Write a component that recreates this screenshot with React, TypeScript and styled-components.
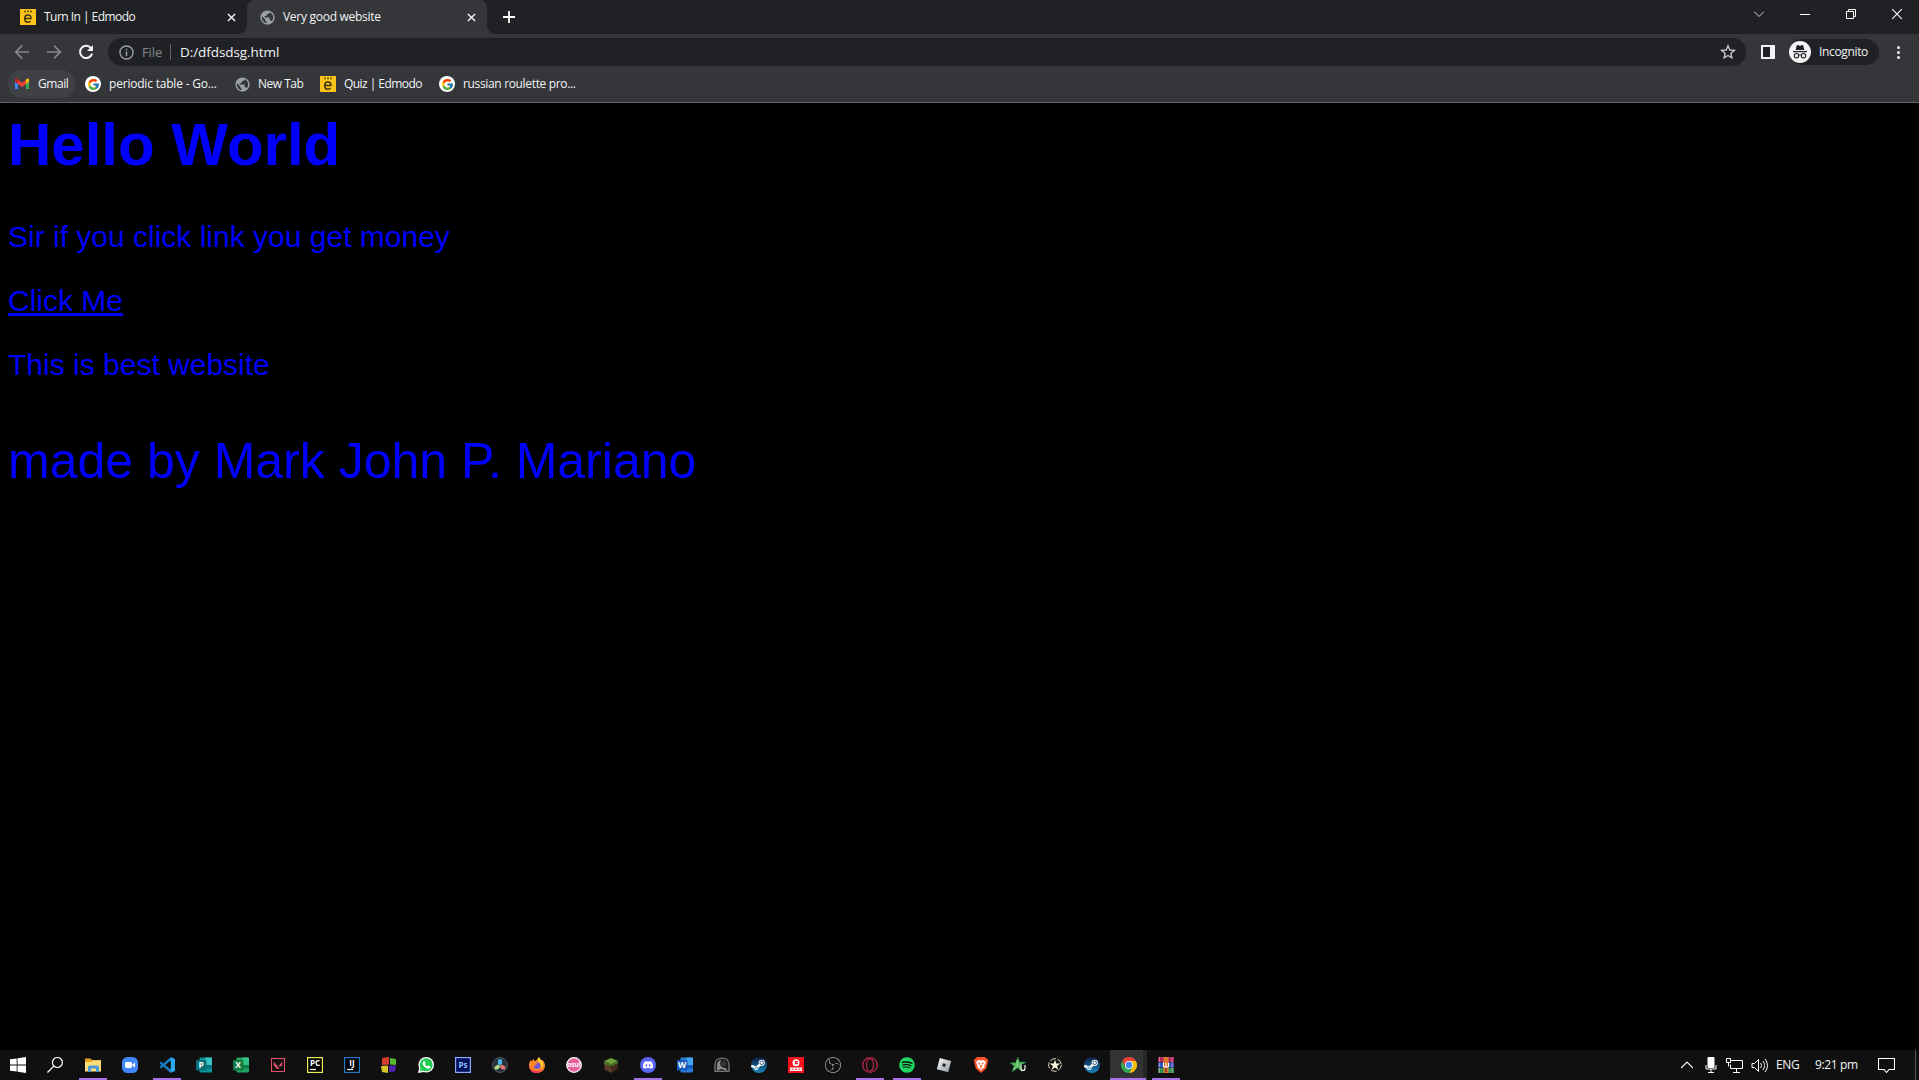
import React from "react";
import styled, { createGlobalStyle } from "styled-components";
import { FcGoogle } from "react-icons/fc";
import { FaSpotify, FaDiscord } from "react-icons/fa";
import { MdPublic } from "react-icons/md";
import { SiObsstudio, SiValorant } from "react-icons/si";

const Global = createGlobalStyle`
  * { box-sizing: border-box; }
  html, body { margin: 0; background: #000; overflow: hidden; }
  svg { display: block; flex: none; }
`;
const Screen = styled.div`
  width: 1919px; height: 1080px; display: flex; flex-direction: column;
  background: #000; font-family: "Open Sans", "Noto Sans", sans-serif; color: #e8eaed;
`;
const Label = styled.span<{ $w?: number; $size?: number; $ls?: number; $color?: string }>`
  flex: none; white-space: nowrap; line-height: 16px;
  width: ${p => (p.$w ? p.$w + "px" : "auto")};
  font-size: ${p => p.$size ?? 12}px;
  letter-spacing: ${p => p.$ls ?? -0.35}px;
  color: ${p => p.$color ?? "#f1f3f4"};
`;
const TabStrip = styled.div`
  height: 34px; flex: none; background: #202124; display: flex; align-items: stretch;
`;
const Tab = styled.div<{ $active?: boolean }>`
  position: relative; flex: none; display: flex; align-items: center;
  width: ${p => (p.$active ? 240 : 247)}px;
  padding: 0 11px 0 ${p => (p.$active ? 12 : 20)}px;
  background: ${p => (p.$active ? "#35363a" : "transparent")};
  border-radius: 8px 8px 0 0; gap: 8px;
  ${p => p.$active && `
    &::before, &::after { content: ""; position: absolute; bottom: 0; width: 8px; height: 8px; }
    &::before { left: -8px; background: radial-gradient(circle at 0 0, transparent 7.5px, #35363a 8px); }
    &::after { right: -8px; background: radial-gradient(circle at 100% 0, transparent 7.5px, #35363a 8px); }
  `}
`;
const Spacer = styled.div`flex: 1;`;
const NewTab = styled.div`width: 44px; display: flex; align-items: center; justify-content: center;`;
const WindowControls = styled.div`display: flex; margin-right: -1px;`;
const WindowButton = styled.div`
  width: 46px; height: 28px; display: flex; align-items: center; justify-content: center;
`;
const Toolbar = styled.div`
  height: 36px; flex: none; background: #35363a; display: flex; align-items: center; padding: 0 12px 0 6px;
`;
const NavButton = styled.div`width: 32px; display: flex; justify-content: center;`;
const AddressBar = styled.div`
  width: 1638px; height: 28px; margin-left: 6px; border-radius: 14px; background: #202124;
  display: flex; align-items: center; padding: 0 10px 0 11px;
`;
const Scheme = styled.div`margin-left: 8px; display: flex;`;
const AddressDivider = styled.div`width: 1px; height: 16px; margin: 0 9px 0 7px; background: #5f6368;`;
const SidePanel = styled.div`
  width: 14px; height: 14px; margin: 0 14px 0 15px; background: #202124;
  border: 2px solid #f1f3f4; border-right-width: 5px;
`;
const Profile = styled.div`
  width: 90px; height: 26px; border-radius: 13px; background: #202124; display: flex; align-items: center; gap: 8px;
`;
const Dots = styled.div`
  display: flex; flex-direction: column; gap: 2px; margin-left: 18px;
  i { width: 3px; height: 3px; border-radius: 50%; background: #f1f3f4; }
`;
const Bookmarks = styled.div`
  height: 33px; flex: none; background: #35363a; border-bottom: 1px solid #626366;
  display: flex; align-items: flex-start; padding-left: 8px;
`;
const Bookmark = styled.div<{ $hover?: boolean }>`
  height: 28px; display: flex; align-items: center; gap: 8px; flex: none;
  padding: 0 6px; margin-right: 4px; border-radius: 14px;
  background: ${p => (p.$hover ? "#404145" : "transparent")};
`;
const Disc = styled.span`
  width: 16px; height: 16px; border-radius: 50%; background: #fff;
  display: flex; align-items: center; justify-content: center;
`;
const Page = styled.main`
  flex: 1; padding: 8px; background: #000; color: #0000ff; overflow: hidden;
  font-family: "Liberation Sans", Arial, sans-serif; font-size: 30px;
`;
const Title = styled.h1`font-size: 60px; line-height: 68px; margin: 0 0 41px; font-weight: bold;`;
const Paragraph = styled.p`margin: 0 0 30px; line-height: 34px;`;
const Link = styled.a`color: #0000ff; text-decoration: underline; text-decoration-thickness: 3px; text-underline-offset: 2px;`;
const Credit = styled.p`font-size: 50px; line-height: 57px; margin: 51px 0 0;`;
const Taskbar = styled.footer`
  height: 30px; flex: none; background: #101010; display: flex; align-items: stretch;
`;
const Slot = styled.div<{ $open?: boolean; $current?: boolean; $system?: boolean }>`
  width: 37px; flex: none; display: flex; align-items: center; justify-content: center;
  padding-right: ${p => (p.$system ? 2 : 0)}px;
  background: ${p => (p.$current ? "linear-gradient(90deg, #333 33px, #262626 33px)" : "transparent")};
  position: relative;
  &::after {
    content: ""; position: absolute; bottom: 0; height: 2px; background: #a873e8;
    left: ${p => (p.$current ? 0 : 5)}px; right: ${p => (p.$current ? 1 : 4)}px;
    display: ${p => (p.$open || p.$current ? "block" : "none")};
  }
`;
const Tray = styled.div`display: flex; align-items: center; width: 240px; flex: none;`;
const TrayItem = styled.div<{ $w: number }>`width: ${p => p.$w}px; flex: none; display: flex; justify-content: center;`;
const DesktopEdge = styled.div`width: 1px; height: 30px; background: #555; margin-left: auto; margin-right: 3px;`;

const Svg = ({ children, s = 16, box = 16 }: { children: React.ReactNode; s?: number; box?: number }) => (
  <svg width={s} height={s} viewBox={`0 0 ${box} ${box}`} fill="none">{children}</svg>
);
const Letter = ({ x, y, size, fill = "#fff", children }: { x: number; y: number; size: number; fill?: string; children: string }) => (
  <text x={x} y={y} fontSize={size} fill={fill} fontWeight="700" textAnchor="middle" fontFamily="Open Sans, sans-serif">{children}</text>
);
const Edmodo = () => (
  <Svg>
    <path fill="#fcc419" d="M0 0h16v16H0z" />
    <path d="M4.900 9.600h6.100C11 7.300 9.900 6 8 6S4.700 7.600 4.700 9.700 5.900 13.200 8 13.200c1.100 0 2-.3 2.700-.9" stroke="#3b3213" strokeWidth="1.500" />
    <path d="M4.600 1.600l.9 1.700M8 1.200v2M11.400 1.600l-.9 1.700" stroke="#3b3213" strokeWidth="1.300" />
  </Svg>
);
const Globe = () => <MdPublic size={17} color="#9aa0a6" style={{ margin: -0.5 }} />;
const Close = ({ s = 9, w = 1.6 }: { s?: number; w?: number }) => (
  <Svg s={s} box={10}><path d="M1 1l8 8M9 1L1 9" stroke="#f1f3f4" strokeWidth={w} /></Svg>
);
const Arrow = ({ flip }: { flip?: boolean }) => (
  <Svg>
    <path transform={flip ? "matrix(-1 0 0 1 16 0)" : undefined} d="M15 8H2M8 1.700L1.700 8 8 14.300" stroke="#85878b" strokeWidth="1.700" />
  </Svg>
);
const Gmail = () => (
  <Svg>
    <path fill="#4285f4" d="M1 4v9h3V6z" /><path fill="#34a853" d="M12 6v7h3V4z" />
    <path fill="#ea4335" d="M4 3.800l4 3 4-3V8l-4 3-4-3z" />
    <path fill="#c5221f" d="M1 4c0-1.500 1.600-1.900 3-.6V8L1 5.800z" />
    <path fill="#fbbc04" d="M15 4c0-1.500-1.600-1.900-3-.6V8l3-2.200z" />
  </Svg>
);
const Incognito = () => (
  <Svg s={22} box={22}>
    <circle cx="11" cy="11" r="11" fill="#f1f3f4" />
    <path fill="#202124" d="M7.600 4.800c.3-.9.900-.9 1.500-.5 1.200.5 2.500.5 3.700 0 .7-.4 1.300-.3 1.500.5l1 4.200H6.600zM4 10h14v1.200H4z" />
    <path d="M9.700 14.300c.8-.6 1.800-.6 2.600 0" stroke="#202124" />
    <circle cx="7.500" cy="14.700" r="2.200" stroke="#202124" strokeWidth="1.100" /><circle cx="14.500" cy="14.700" r="2.200" stroke="#202124" strokeWidth="1.100" />
  </Svg>
);
const Windows = () => (
  <Svg><path fill="#fff" d="M0 2.300l6.700-.9v6.200H0zM7.500 1.300L16 0v7.600H7.500zM0 8.400h6.700v6.200L0 13.700zM7.500 8.400H16V16l-8.500-1.200z" /></Svg>
);
const Search = () => <Svg><circle cx="10.400" cy="5.500" r="5" stroke="#fff" strokeWidth="1.200" /><path d="M6.800 9.100L.5 15.500" stroke="#fff" strokeWidth="1.300" /></Svg>;
const Folder = () => (
  <Svg>
    <path fill="#e9a21b" d="M0 1.500h5.500L7 3h9v4H0z" /><path fill="#ffdc7a" d="M0 5h6l1.500-1.500H16v11H0z" />
    <path fill="#4a9bd8" d="M3 15V10.500C3 9 4 8.500 5 8.500h7c1 0 2 .5 2 2V15h-3v-3.500H6V15z" />
  </Svg>
);
const Zoom = () => (
  <Svg><rect width="16" height="16" rx="5.500" fill="#4087fc" /><rect x="3" y="5" width="7" height="6" rx="1.400" fill="#fff" /><path fill="#fff" d="M10.500 7.500L13 5.600v5l-2.500-1.800z" /></Svg>
);
const Code = () => (
  <Svg>
    <path d="M1.200 5.300L12 14.500M1.200 10.700L12 1.500" stroke="#1381c9" strokeWidth="2.300" />
    <path fill="#2aa7ef" d="M11.500 0L16 2v12l-4.500 2z" /><path fill="#101010" d="M11.600 4.900v6.200L7.800 8z" />
  </Svg>
);
const Office = ({ ch, dark, mid, light }: { ch: string; dark: string; mid: string; light: string }) => (
  <Svg>
    <rect x="3.500" y=".5" width="12.500" height="15" rx="1" fill={mid} />
    <path fill={light} d="M9.500.5H15a1 1 0 011 1V8H9.500z" /><path fill={dark} d="M9.500 8H16v3.500H9.500z" />
    <rect y="3" width="10.500" height="10.500" rx="1" fill={dark} />
    <Letter x={5.2} y={11.200} size={8.5}>{ch}</Letter>
  </Svg>
);
const Framed = ({ ch, border, fill = "#000", fg = "#fff", bar }: { ch: string; border: string; fill?: string; fg?: string; bar?: boolean }) => (
  <Svg>
    <rect x=".6" y=".6" width="14.800" height="14.800" fill={fill} stroke={border} strokeWidth="1.200" />
    <Letter x={8} y={bar ? 9 : 11} size={8} fill={fg}>{ch}</Letter>
    {bar && <path d="M3 12.500h6" stroke="#fff" strokeWidth="1.200" />}
  </Svg>
);
const Valorant = () => (
  <Svg><rect x="1.500" y="1.500" width="13" height="13" stroke="#e0526b" strokeWidth="1.100" /><g transform="translate(3.500 3.500)"><SiValorant size={9} color="#e0526b" /></g></Svg>
);
const Blocks = () => (
  <Svg><path fill="#d93a2e" d="M1 1l7-1v7.500L1 8z" /><path fill="#58b82e" d="M9 1l6 1v6l-6-.5z" /><path fill="#d6c42d" d="M0 9l7-.5V16l-6-1z" /><path fill="#5222ad" d="M8 8.500h7l-1 6-6 .5z" /></Svg>
);
const WhatsApp = () => (
  <Svg>
    <circle cx="8.200" cy="7.800" r="7.800" fill="#fff" /><path fill="#fff" d="M0 16l1.500-6L6 15z" />
    <circle cx="8.200" cy="7.800" r="6.500" fill="#24c950" /><path fill="#24c950" d="M1.800 14.200l1-4 3 3z" />
    <path fill="#fff" d="M5.500 4.200c.6-.5 1.200-.3 1.400.2l.6 1.400c.1.400-.5.900-.7 1.200.6 1.200 1.500 2 2.700 2.600.4-.4.800-1.100 1.200-1l1.500.8c.5.300.3 1-.1 1.500-1.400 1.400-3.600.5-5.100-.7C5.300 8.900 3.600 6 5.500 4.200z" />
  </Svg>
);
const Resolve = () => (
  <Svg><circle cx="8" cy="8" r="7.500" fill="#28323c" stroke="#59636d" strokeWidth=".8" /><ellipse cx="8" cy="4.900" rx="2.200" ry="3" fill="#4bb5e9" /><ellipse cx="5.200" cy="10.200" rx="2.900" ry="2" transform="rotate(-30 5.200 10.200)" fill="#b9dc83" /><ellipse cx="10.800" cy="10.200" rx="2.900" ry="2" transform="rotate(30 10.800 10.200)" fill="#ee746e" /></Svg>
);
const Firefox = () => (
  <Svg>
    <path fill="#ff8a25" d="M2 3l1 1.300L4.500 2l1.300 2C8 4 8.500 1.500 10 0c.4 2 2 2.600 3 3.800l.8-.6C15.300 5 16 6.800 16 8.600 16 13 12.500 16 8 16S0 12.800 0 8.500C0 6 .8 4.500 2 3z" />
    <path fill="#ffd33a" d="M10 0c.4 2 2 2.600 3 3.800 1.800 2.400 1.500 6-.5 8C13 8 11 5 8.400 4 9 2.300 9 1.300 10 0z" />
    <path fill="#fc375d" d="M0 8c.7 3 2 5 5 5.600 3 .8 6 0 8-1.600-1 2.600-3 4-6 4-4 0-7-3.500-7-8z" /><circle cx="8" cy="8.700" r="3.300" fill="#7556d8" />
    <path fill="#ff8a25" d="M3 6.400l4-.6c1 .1 1.500 1 .5 1.500L5.800 8.500 5 10z" />
  </Svg>
);
const Osu = () => (
  <Svg><circle cx="8" cy="8" r="7.300" fill="#e8629e" stroke="#fff" strokeWidth="1.200" /><Letter x={8} y={10.300} size={6.500}>osu!</Letter></Svg>
);
const Grass = () => (
  <Svg><path fill="#6ca13a" d="M1 4l7-3 7 3-7 3.500z" /><path fill="#5a3c26" d="M1 4l7 3.500V16l-6.500-3.500z" /><path fill="#432c1d" d="M15 4L8 7.500V16l6.500-3.500z" /><path fill="#47762a" d="M1 4l7 3.500L15 4v2l-2 1.500-1-.5-2 2-2-.6L6 9 5 7.500 3 8 1 6z" /></Svg>
);
const Discord = () => <Svg><circle cx="8" cy="8" r="8" fill="#5865f2" /><g transform="translate(2.500 2.500)"><FaDiscord size={11} color="#fff" /></g></Svg>;
const Cave = () => (
  <Svg>
    <path d="M1 14.300V7.500C1 3.500 4 1.200 8 1.200s7 2.300 7 6.300v6.800z" fill="#1b1b1b" stroke="#777" strokeWidth="1.300" />
    <path fill="#8a8a8a" d="M3 13.500V8c0-3 2-5 4.500-5.300C5.700 4.500 5.500 8.500 8 10c1.500.9 3 .6 4 1.500l1.500 2c-3 .5-4-1.500-6-1.500S5.500 13.500 3 13.500z" />
    <circle cx="9.600" cy="6.500" r="2.800" fill="#333" />
  </Svg>
);
const Steam = () => (
  <Svg>
    <defs><linearGradient id="steam" x2="0" y2="1"><stop stopColor="#101c42" /><stop offset="1" stopColor="#1585b9" /></linearGradient></defs>
    <circle cx="8" cy="8" r="8" fill="url(#steam)" />
    <path d="M.3 8.800l5 2 4.400-3.800" stroke="#fff" strokeWidth="2.400" /><circle cx="10.700" cy="5.800" r="3.100" fill="#fff" /><circle cx="10.700" cy="5.800" r="1.800" fill="#fff" stroke="#173968" strokeWidth=".8" /><circle cx="5.200" cy="11" r="2.300" fill="#fff" /><circle cx="5.200" cy="11" r="1.300" stroke="#1770a0" strokeWidth=".6" />
  </Svg>
);
const RedClub = () => (
  <Svg><path fill="#f5101e" d="M0 0h16v16H0z" /><circle cx="8" cy="5.700" r="3.500" fill="#fff" /><path d="M10 4.700H7.500v2H10" stroke="#f5101e" strokeWidth="1.200" /><path fill="#fff" d="M2 10.500h12V14H2z" /><path d="M3.500 12.200h2M7 12.200h2M10.500 12.200h2" stroke="#f5101e" /></Svg>
);
const Opera = () => (
  <Svg><circle cx="8" cy="8" r="7.300" stroke="#b92749" strokeWidth="1.300" /><ellipse cx="8" cy="8" rx="3.500" ry="6.200" stroke="#b92749" strokeWidth="1.200" /></Svg>
);
const Spotify = () => <FaSpotify size={16} color="#1ed760" />;
const Roblox = () => (
  <Svg><defs><linearGradient id="rbx" x2="1" y2="1"><stop stopColor="#fff" /><stop offset="1" stopColor="#8d959d" /></linearGradient></defs><path fill="url(#rbx)" d="M3.800 1l11.400 3-3 11.300-11.400-3z" /><path fill="#22272b" d="M6.900 6.200l3 .8-.8 3-3-.8z" /></Svg>
);
const Brave = () => (
  <Svg><path fill="#fb542b" d="M4 0h8l1.300 1.600 1.400.3.300 2.400-1.800 7.200L8 16l-5.200-4.500L1 4.300l.3-2.400 1.400-.3z" /><path fill="#fff" d="M5 3l3 .6L11 3l2 2.600-1.600 3 .3 1.500L8 13.500l-3.700-3.400.3-1.500L3 5.600z" /><path fill="#fb542b" d="M4.700 5.500l2.500.4-.4 2.200zM11.300 5.500l-2.500.4.4 2.200zM7.300 8h1.400L9 9.800l-1 .6-1-.6zM6 10.500l2 .8 2-.8-2 1.700z" /></Svg>
);
const GreenStar = () => (
  <Svg><path fill="#55b85b" stroke="#1e6d35" strokeWidth=".7" d="M8 0l1.500 5H16l-5 3.500 1 6-4.500-3.500L2 15l2-6L0 6l5.700-.5z" /><path d="M7 3l.5 6L3 13" stroke="#a4e6a0" /><path fill="#0b1d10" d="M10 7h5v5c0 2-1 3-3 3v-2z" /><path d="M11 7v4.500c0 1.500 1 2 2 2 1.500 0 2-1 2-2V8" stroke="#fff" strokeWidth="1.100" /></Svg>
);
const ArmyStar = () => (
  <Svg><circle cx="8" cy="8" r="6.300" stroke="#f7f3d9" strokeWidth=".9" strokeDasharray="6.300 1.600" /><path fill="#fffbe2" d="M8 2.800l1.300 3.700h3.900L10.100 8.900l1.200 3.800L8 10.400l-3.300 2.300 1.200-3.800L2.800 6.500h3.900z" /></Svg>
);
const Chrome = () => (
  <Svg><path fill="#ea4335" d="M1.070 4a8 8 0 0113.860 0H8L4.530 10z" /><path fill="#fbbc05" d="M14.930 4A8 8 0 018 16l3.470-6L8 4z" /><path fill="#34a853" d="M1.070 4A8 8 0 008 16l3.470-6H4.530z" /><circle cx="8" cy="8" r="4" fill="#fff" /><circle cx="8" cy="8" r="3.200" fill="#4285f4" /></Svg>
);
const WinRar = () => (
  <Svg><path fill="#b1275c" d="M0 0h16v5H0z" /><path fill="#365cc2" d="M0 5.500h16v5H0z" /><path fill="#2c944c" d="M0 11h16v5H0z" /><path d="M1.500 0v5M1.500 6v4M1.500 11v5M14 0v16" stroke="#d798b8" strokeWidth=".7" /><path fill="#d9792d" d="M5.500 0h5v16h-5z" /><path d="M5.500 5.500V10h5V5.500M8 6v4" stroke="#fff" /><path fill="#a13e30" d="M7 11h2v4H7z" /></Svg>
);

type App = { icon: React.ReactNode; open?: boolean; current?: boolean; system?: boolean };
const apps: App[] = [
  { icon: <Windows />, system: true }, { icon: <Search />, system: true }, { icon: <Folder />, open: true }, { icon: <Zoom /> },
  { icon: <Code />, open: true },
  { icon: <Office ch="P" dark="#087078" mid="#0b929a" light="#37c6c5" /> },
  { icon: <Office ch="X" dark="#107c41" mid="#21a366" light="#33c481" /> },
  { icon: <Valorant /> }, { icon: <Framed ch="PC" border="#e8ed58" bar /> },
  { icon: <Framed ch="IJ" border="#2276c4" bar /> }, { icon: <Blocks /> }, { icon: <WhatsApp /> },
  { icon: <Framed ch="Ps" border="#8ca8ff" fill="#00105a" fg="#8fc5ff" /> },
  { icon: <Resolve /> }, { icon: <Firefox /> }, { icon: <Osu /> }, { icon: <Grass /> },
  { icon: <Discord />, open: true },
  { icon: <Office ch="W" dark="#185abd" mid="#2b7cd3" light="#41a5ee" /> },
  { icon: <Cave /> }, { icon: <Steam /> }, { icon: <RedClub /> }, { icon: <SiObsstudio size={16} color="#aaa" /> },
  { icon: <Opera />, open: true }, { icon: <Spotify />, open: true }, { icon: <Roblox /> },
  { icon: <Brave /> }, { icon: <GreenStar /> }, { icon: <ArmyStar /> }, { icon: <Steam /> },
  { icon: <Chrome />, current: true }, { icon: <WinRar />, open: true },
];

export default function App() {
  return (
    <Screen>
      <Global />
      <TabStrip>
        <Tab><Edmodo /><Label $ls={-0.53}>Turn In | Edmodo</Label><Spacer /><Close /></Tab>
        <Tab $active><Globe /><Label $ls={-0.28}>Very good website</Label><Spacer /><Close /></Tab>
        <NewTab><Svg s={12} box={12}><path d="M6 0v12M0 6h12" stroke="#fff" strokeWidth="1.800" /></Svg></NewTab>
        <Spacer />
        <WindowControls>
          <WindowButton><Svg s={10} box={10}><path d="M0 2.500l5 5 5-5" stroke="#d5d6d8" /></Svg></WindowButton>
          <WindowButton><Svg s={10} box={10}><path d="M0 5.500h10" stroke="#fff" /></Svg></WindowButton>
          <WindowButton><Svg s={10} box={10}><path d="M.5 2.500h7v7h-7zM2.500 2.500v-2h7v7h-2" stroke="#fff" /></Svg></WindowButton>
          <WindowButton><Close s={12} w={1} /></WindowButton>
        </WindowControls>
      </TabStrip>
      <Toolbar>
        <NavButton><Arrow /></NavButton>
        <NavButton><Arrow flip /></NavButton>
        <NavButton><Svg><path d="M13.300 4.600A6.100 6.100 0 1014.100 9.400" stroke="#f1f3f4" strokeWidth="2" /><path fill="#f1f3f4" d="M15 1v6H9z" /></Svg></NavButton>
        <AddressBar>
          <Svg s={15}><circle cx="8" cy="8" r="7" stroke="#9aa0a6" strokeWidth="1.500" /><path d="M8 7v5M8 4v1.600" stroke="#9aa0a6" strokeWidth="1.600" /></Svg>
          <Scheme><Label $w={21} $size={13} $ls={-0.1} $color="#85898e">File</Label></Scheme>
          <AddressDivider />
          <Label $size={13.5} $ls={-0.07}>D:/dfdsdsg.html</Label>
          <Spacer />
          <Svg><path d="M8 1.800l1.800 4.200 4.500.4-3.400 3 1 4.400L8 11.500l-3.900 2.300 1-4.400-3.400-3 4.500-.4z" stroke="#c4c7c9" strokeWidth="1.400" /></Svg>
        </AddressBar>
        <SidePanel />
        <Profile><Incognito /><Label>Incognito</Label></Profile>
        <Dots><i /><i /><i /></Dots>
      </Toolbar>
      <Bookmarks>
        <Bookmark $hover><Gmail /><Label $w={31} $ls={-0.45}>Gmail</Label></Bookmark>
        <Bookmark><Disc><FcGoogle size={13} /></Disc><Label $w={109} $ls={-0.2}>periodic table - Go...</Label></Bookmark>
        <Bookmark><Globe /><Label $w={46} $ls={-0.5}>New Tab</Label></Bookmark>
        <Bookmark><Edmodo /><Label $w={79} $ls={-0.55}>Quiz | Edmodo</Label></Bookmark>
        <Bookmark><Disc><FcGoogle size={13} /></Disc><Label $w={112} $ls={-0.34}>russian roulette pro...</Label></Bookmark>
      </Bookmarks>
      <Page>
        <Title>Hello World</Title>
        <Paragraph>Sir if you click link you get money</Paragraph>
        <Paragraph><Link>Click Me</Link></Paragraph>
        <Paragraph>This is best website</Paragraph>
        <Credit>made by Mark John P. Mariano</Credit>
      </Page>
      <Taskbar>
        {apps.map((a, i) => <Slot key={i} $open={a.open} $current={a.current} $system={a.system}>{a.icon}</Slot>)}
        <Spacer />
        <Tray>
          <TrayItem $w={16}><Svg s={12} box={12}><path d="M0 9l6-6 6 6" stroke="#fff" strokeWidth="1.200" /></Svg></TrayItem>
          <TrayItem $w={31}><Svg><rect x="4.500" y="0" width="7" height="11" rx="1" fill="#fff" /><path d="M3 8v4h10V8M8 12v3.500M5 15.500h6" stroke="#fff" /></Svg></TrayItem>
          <TrayItem $w={17}><Svg s={17} box={17}><path d="M5 3.500h11.500v8H4.500v-4M10.500 12v3M7 15.500h7M.5 1.500h4v4h-4zM2.500 5.500v4" stroke="#fff" /></Svg></TrayItem>
          <TrayItem $w={33}><Svg s={17} box={17}><path d="M1 6.500h2.500l4-4v12l-4-4H1zM9.500 6c1.300 1.600 1.300 3.400 0 5M11.800 4c2.300 2.700 2.300 6.300 0 9M14 2c3.200 4 3.200 9 0 13" stroke="#fff" /></Svg></TrayItem>
          <Label $w={39} $size={12} $ls={-0.4}>ENG</Label>
          <Label $w={63} $size={12} $ls={-0.35}>9:21 pm</Label>
          <Svg s={17} box={17}><path d="M.5 1.500h16v11h-5.500l-2.500 3-2.500-3H.5z" stroke="#fff" strokeWidth="1.100" /></Svg>
          <DesktopEdge />
        </Tray>
      </Taskbar>
    </Screen>
  );
}
